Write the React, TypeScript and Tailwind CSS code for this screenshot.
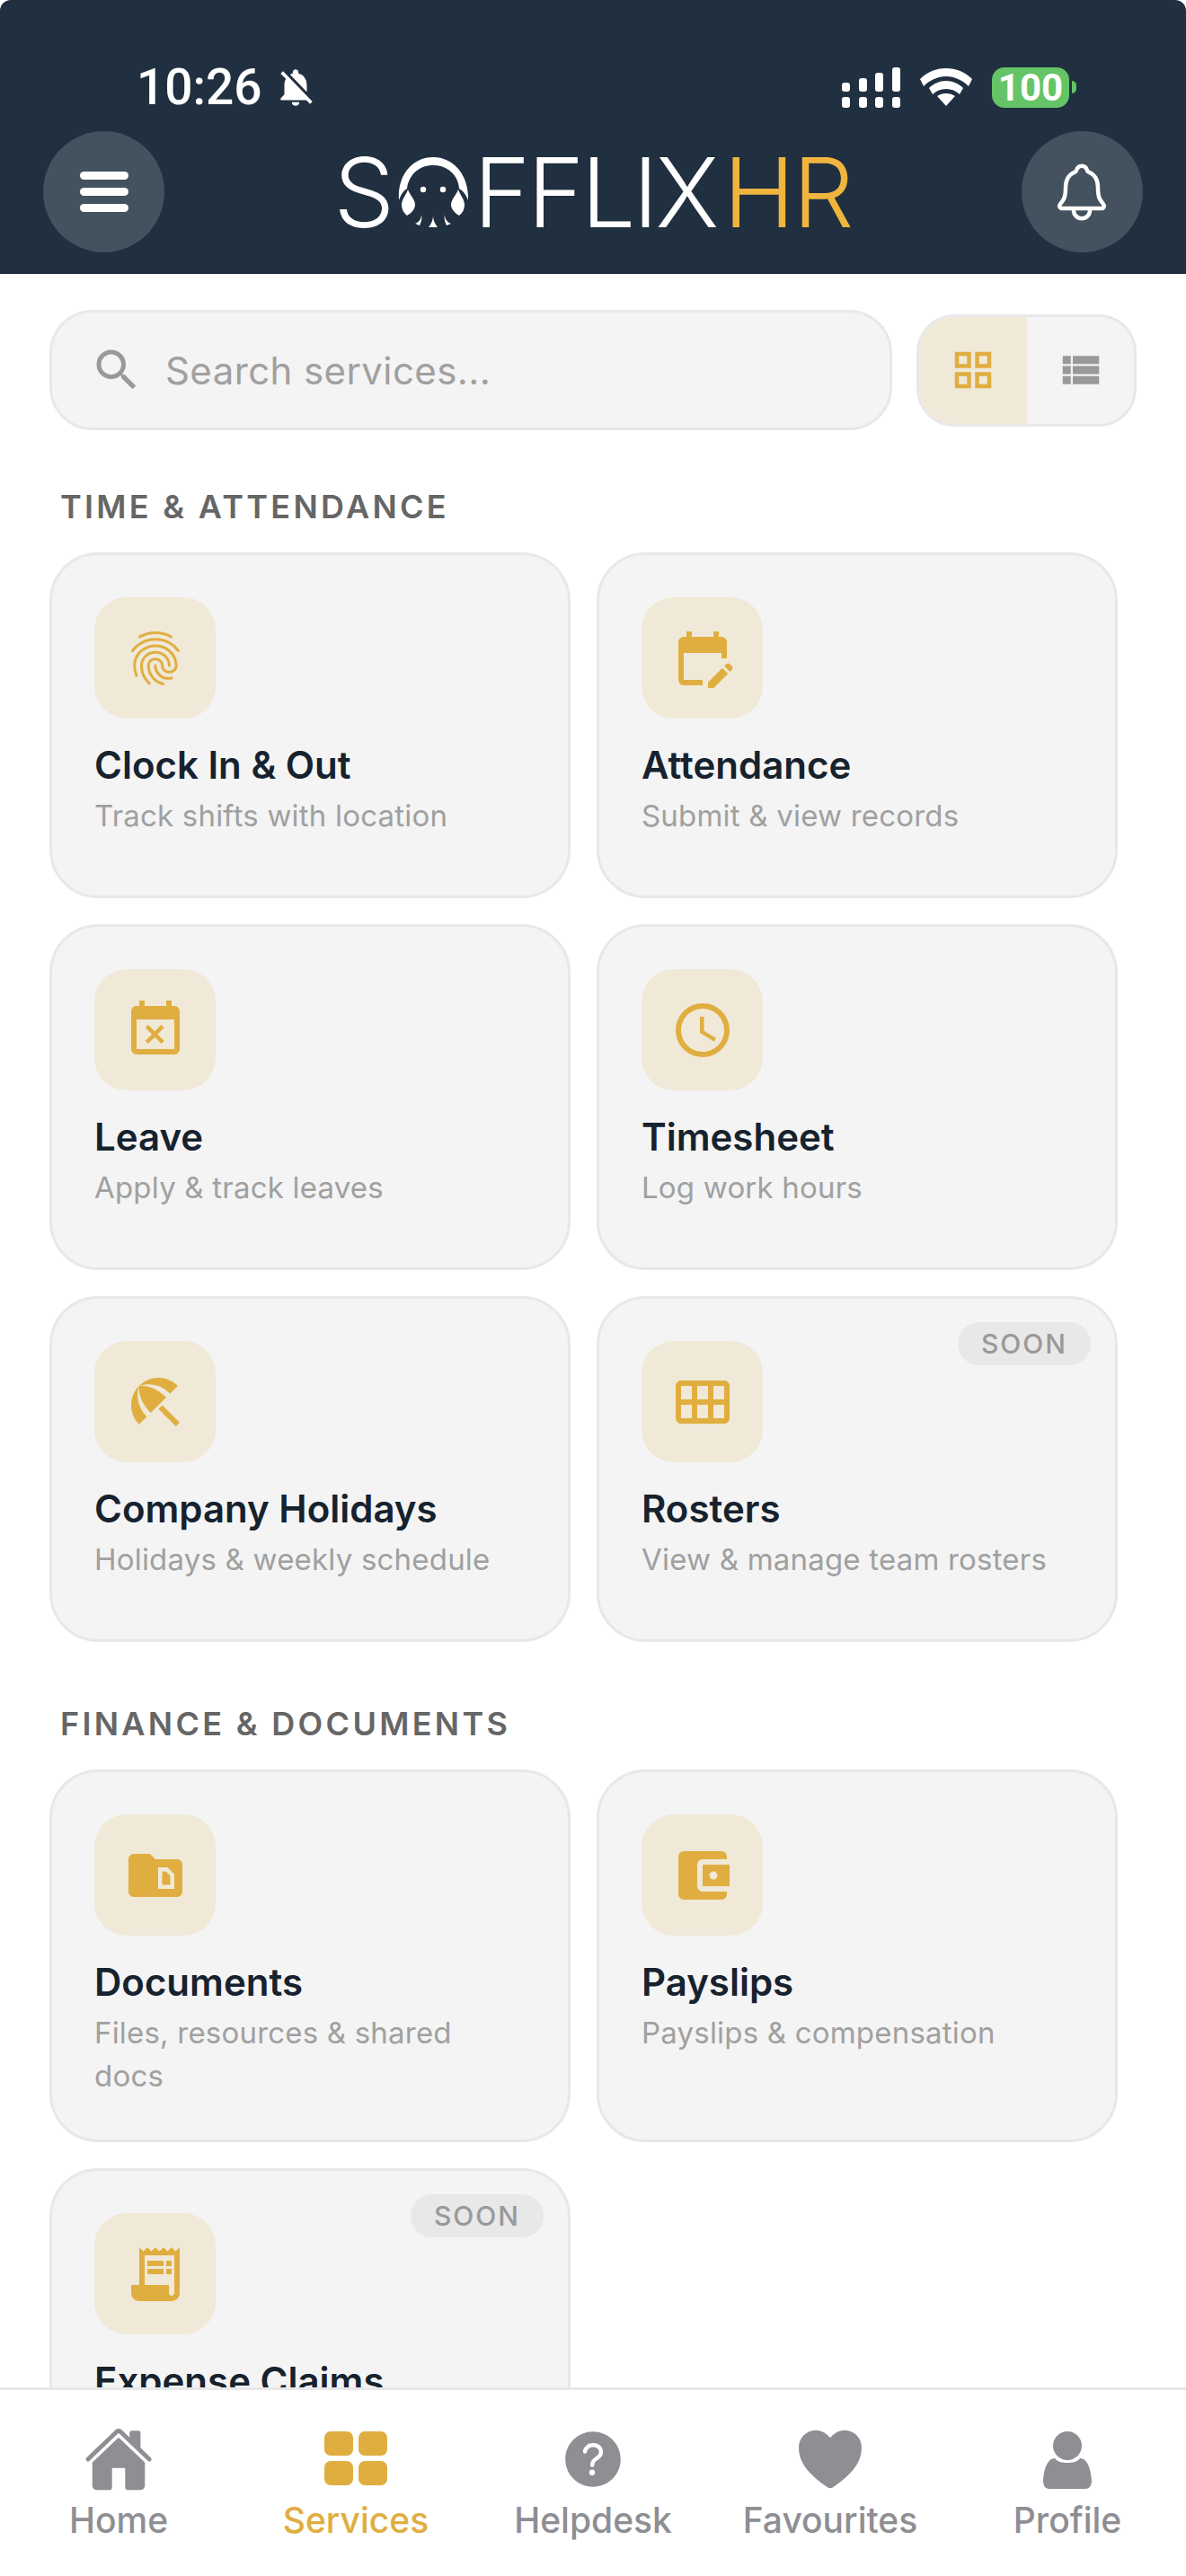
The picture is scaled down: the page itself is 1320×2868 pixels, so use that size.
import React from 'react';
import {
  MdFingerprint,
  MdEditCalendar,
  MdEventBusy,
  MdAccessTime,
  MdBeachAccess,
  MdCalendarViewMonth,
  MdSnippetFolder,
  MdAccountBalanceWallet,
  MdReceiptLong,
  MdSearch,
  MdGridView,
  MdViewList,
  MdNotificationsOff,
} from 'react-icons/md';
import { IoHome, IoHelpCircle, IoHeart, IoNotificationsOutline } from 'react-icons/io5';

type Service = { icon: React.ElementType; title: string; desc: string; soon?: boolean };

const timeServices: Service[] = [
  { icon: MdFingerprint, title: 'Clock In & Out', desc: 'Track shifts with location' },
  { icon: MdEditCalendar, title: 'Attendance', desc: 'Submit & view records' },
  { icon: MdEventBusy, title: 'Leave', desc: 'Apply & track leaves' },
  { icon: MdAccessTime, title: 'Timesheet', desc: 'Log work hours' },
  { icon: MdBeachAccess, title: 'Company Holidays', desc: 'Holidays & weekly schedule' },
  { icon: MdCalendarViewMonth, title: 'Rosters', desc: 'View & manage team rosters', soon: true },
];

const financeServices: Service[] = [
  { icon: MdSnippetFolder, title: 'Documents', desc: 'Files, resources & shared docs' },
  { icon: MdAccountBalanceWallet, title: 'Payslips', desc: 'Payslips & compensation' },
  { icon: MdReceiptLong, title: 'Expense Claims', desc: 'Submit & track expenses', soon: true },
];

// the person in the tab bar has a gap between head and shoulders, no package icon has that
const ProfileIcon = ({ size, color }: { size: number; color: string }) => (
  <svg width={size} height={size} viewBox="0 0 72 72" fill={color}>
    <circle cx="36" cy="21" r="16" />
    <path d="M22 35C25 39 30 40 36 40S47 39 50 35C58 35 62 46 63 60C63 66 60 69 56 69H16C12 69 9 66 9 60C10 46 14 35 22 35Z" />
  </svg>
);

// wider than tall in the picture
const ServicesIcon = ({ size, color }: { size: number; color: string }) => (
  <svg width={size} height={size} viewBox="0 0 72 72" fill={color}>
    <rect x="1" y="5" width="32" height="27" rx="7" />
    <rect x="39" y="5" width="32" height="27" rx="7" />
    <rect x="1" y="38" width="32" height="27" rx="7" />
    <rect x="39" y="38" width="32" height="27" rx="7" />
  </svg>
);

const tabs = [
  { icon: IoHome, label: 'Home', size: 78 },
  { icon: ServicesIcon, label: 'Services', size: 72, active: true },
  { icon: IoHelpCircle, label: 'Helpdesk', size: 82 },
  { icon: IoHeart, label: 'Favourites', size: 86 },
  { icon: ProfileIcon, label: 'Profile', size: 72 },
];

const Octopus = () => (
  <svg width="78" height="78" viewBox="0 0 78 78" fill="#fff" className="mr-[6px] ml-[4px] shrink-0">
    <path d="M1 48C-1 20 16 0 39 0s40 20 39 48c-2-6-6-11-10-13C67 19 54 9 39 9S12 19 10 35C6 37 3 42 1 48Z" />
    <path d="M11 36c2 6 8 11 8 17 0 5-5 10-9 12-4-3-6-7-6-12 0-6 5-11 7-17Z" />
    <path d="M67 36c-2 6-8 11-8 17 0 5 5 10 9 12 4-3 6-7 6-12 0-6-5-11-7-17Z" />
    <circle cx="28" cy="36" r="3.2" />
    <circle cx="50" cy="36" r="3.2" />
    <path d="M26 64c0 4-2 8-7 10l5 2c2-4 3-8 2-12Z" />
    <path d="M39 65c0 5-2 9-5 13h10c-3-4-5-8-5-13Z" />
    <path d="M52 64c0 4 2 8 7 10l-5 2c-2-4-3-8-2-12Z" />
  </svg>
);

const Signal = () => (
  <svg width="65" height="45" viewBox="0 0 65 45" fill="#fff">
    <rect x="0" y="17" width="9" height="10" rx="3" />
    <rect x="19" y="12" width="9" height="15" rx="3" />
    <rect x="37" y="6" width="9" height="21" rx="3" />
    <rect x="56" y="0" width="9" height="27" rx="3" />
    <rect x="0" y="33" width="9" height="12" rx="3" />
    <rect x="19" y="33" width="9" height="12" rx="3" />
    <rect x="37" y="33" width="9" height="12" rx="3" />
    <rect x="56" y="33" width="9" height="12" rx="3" />
  </svg>
);

const Wifi = () => (
  <svg width="58" height="42" viewBox="0 0 58 42" fill="#fff">
    <path d="M29 0c11 0 21 4 29 12l-4 8C47 13 38 9 29 9S11 13 4 20l-4-8C8 4 18 0 29 0Z" />
    <path d="M29 14c7 0 14 3 19 8l-4 7c-4-4-9-6-15-6s-11 2-15 6l-4-7c5-5 12-8 19-8Z" />
    <path d="M29 28c4 0 7 1 10 3L29 42 19 31c3-2 6-3 10-3Z" />
  </svg>
);

const ServiceCard = ({ icon: Icon, title, desc, soon }: Service) => (
  <div className="relative min-h-[385px] rounded-[54px] border-[3px] border-[#e8e8e8] bg-[#f4f4f4] px-[47px] pt-[47px] pb-[47px]">
    {soon && (
      <span className="absolute top-[26px] right-[27px] flex h-[48px] w-[148px] items-center justify-center rounded-full bg-[#e8e8e8] text-[30px] font-medium tracking-[2px] text-[#999999]">
        SOON
      </span>
    )}
    <div className="flex h-[135px] w-[135px] items-center justify-center rounded-[36px] bg-[#f0e9d8]">
      <Icon size={72} color="#e0ae40" />
    </div>
    <div className="mt-[25px] text-[42px] leading-[54px] font-semibold text-[#16222e]">{title}</div>
    <div className="mt-[5px] text-[33px] leading-[48px] tracking-[0.2px] text-[#a0a0a0]">{desc}</div>
  </div>
);

const Section = ({ label, items, className }: { label: string; items: Service[]; className?: string }) => (
  <section className={className}>
    <h2 className="mb-[27px] pl-[12px] text-[36px] leading-[48px] font-semibold tracking-[3.3px] text-[#666666]">{label}</h2>
    <div className="grid w-[1189px] grid-cols-2 gap-[29px]">
      {items.map((s) => (
        <ServiceCard key={s.title} {...s} />
      ))}
    </div>
  </section>
);

export default function App() {
  return (
    <div className="flex h-[2868px] w-[1320px] flex-col overflow-hidden bg-white font-[family-name:Inter,sans-serif]">
      <header className="h-[305px] shrink-0 rounded-t-[12px] bg-[#213040] pt-[70px]">
        <div className="flex h-[54px] items-center justify-between pr-[122px] pl-[152px]">
          <div className="flex items-center gap-[12px]">
            <span className="font-[family-name:Roboto,sans-serif] text-[55px] leading-[54px] font-medium text-white">10:26</span>
            <MdNotificationsOff size={50} color="#fff" />
          </div>
          <div className="flex items-center gap-[22px]">
            <Signal />
            <Wifi />
            <div className="flex items-center gap-[3px]">
              <span className="flex h-[45px] w-[86px] items-center justify-center rounded-[14px] bg-[#65c466] font-[family-name:Roboto,sans-serif] text-[42px] font-bold text-white">
                100
              </span>
              <span className="h-[14px] w-[5px] rounded-r-full bg-[#65c466]" />
            </div>
          </div>
        </div>
        <div className="mt-[22px] flex items-center justify-between px-[48px]">
          <button className="flex h-[135px] w-[135px] flex-col items-center justify-center gap-[9px] rounded-full bg-[#44515e]">
            <span className="h-[9px] w-[54px] rounded-full bg-white" />
            <span className="h-[9px] w-[54px] rounded-full bg-white" />
            <span className="h-[9px] w-[54px] rounded-full bg-white" />
          </button>
          <div className="flex items-center text-[107px] leading-[110px] font-[350]">
            <span className="text-white">S</span>
            <Octopus />
            <span className="tracking-[-3px] text-white">FFLIX</span>
            <span className="ml-[8px] tracking-[-2px] text-[#f0b53f]">HR</span>
          </div>
          <button className="flex h-[135px] w-[135px] items-center justify-center rounded-full bg-[#44515e]">
            <IoNotificationsOutline size={72} color="#fff" />
          </button>
        </div>
      </header>

      <main className="min-h-0 flex-1 overflow-hidden pt-[40px] pl-[55px]">
        <div className="flex items-center gap-[27px] pr-[55px]">
          <div className="flex h-[134px] w-[938px] items-center gap-[24px] rounded-[48px] border-[3px] border-[#e8e8e8] bg-[#f4f4f4] pl-[42px]">
            <MdSearch size={60} color="#999999" />
            <span className="text-[42px] tracking-[0.4px] text-[#a0a0a0]">Search services...</span>
          </div>
          <div className="flex h-[125px] w-[245px] overflow-hidden rounded-[42px] border-[3px] border-[#e8e8e8] bg-[#f4f4f4]">
            <div className="flex w-[120px] items-center justify-center bg-[#f0e9d8]">
              <MdGridView size={54} color="#e0ae40" />
            </div>
            <div className="flex flex-1 items-center justify-center">
              <MdViewList size={54} color="#999999" />
            </div>
          </div>
        </div>
        <Section label="TIME & ATTENDANCE" items={timeServices} className="mt-[61px]" />
        <Section label="FINANCE & DOCUMENTS" items={financeServices} className="mt-[67px]" />
      </main>

      <nav className="grid h-[210px] shrink-0 grid-cols-5 border-t-[3px] border-[#e8e8e8] bg-white pt-[41px]">
        {tabs.map(({ icon: Icon, label, active, size }) => (
          <div key={label} className="flex flex-col items-center">
            <div className="flex h-[72px] items-center justify-center">
              <Icon size={size} color={active ? '#e0ae40' : '#8e8e93'} />
            </div>
            <span className={`mt-[8px] text-[39px] leading-[48px] font-medium ${active ? 'text-[#e0ae40]' : 'text-[#8e8e93]'}`}>
              {label}
            </span>
          </div>
        ))}
      </nav>
    </div>
  );
}
